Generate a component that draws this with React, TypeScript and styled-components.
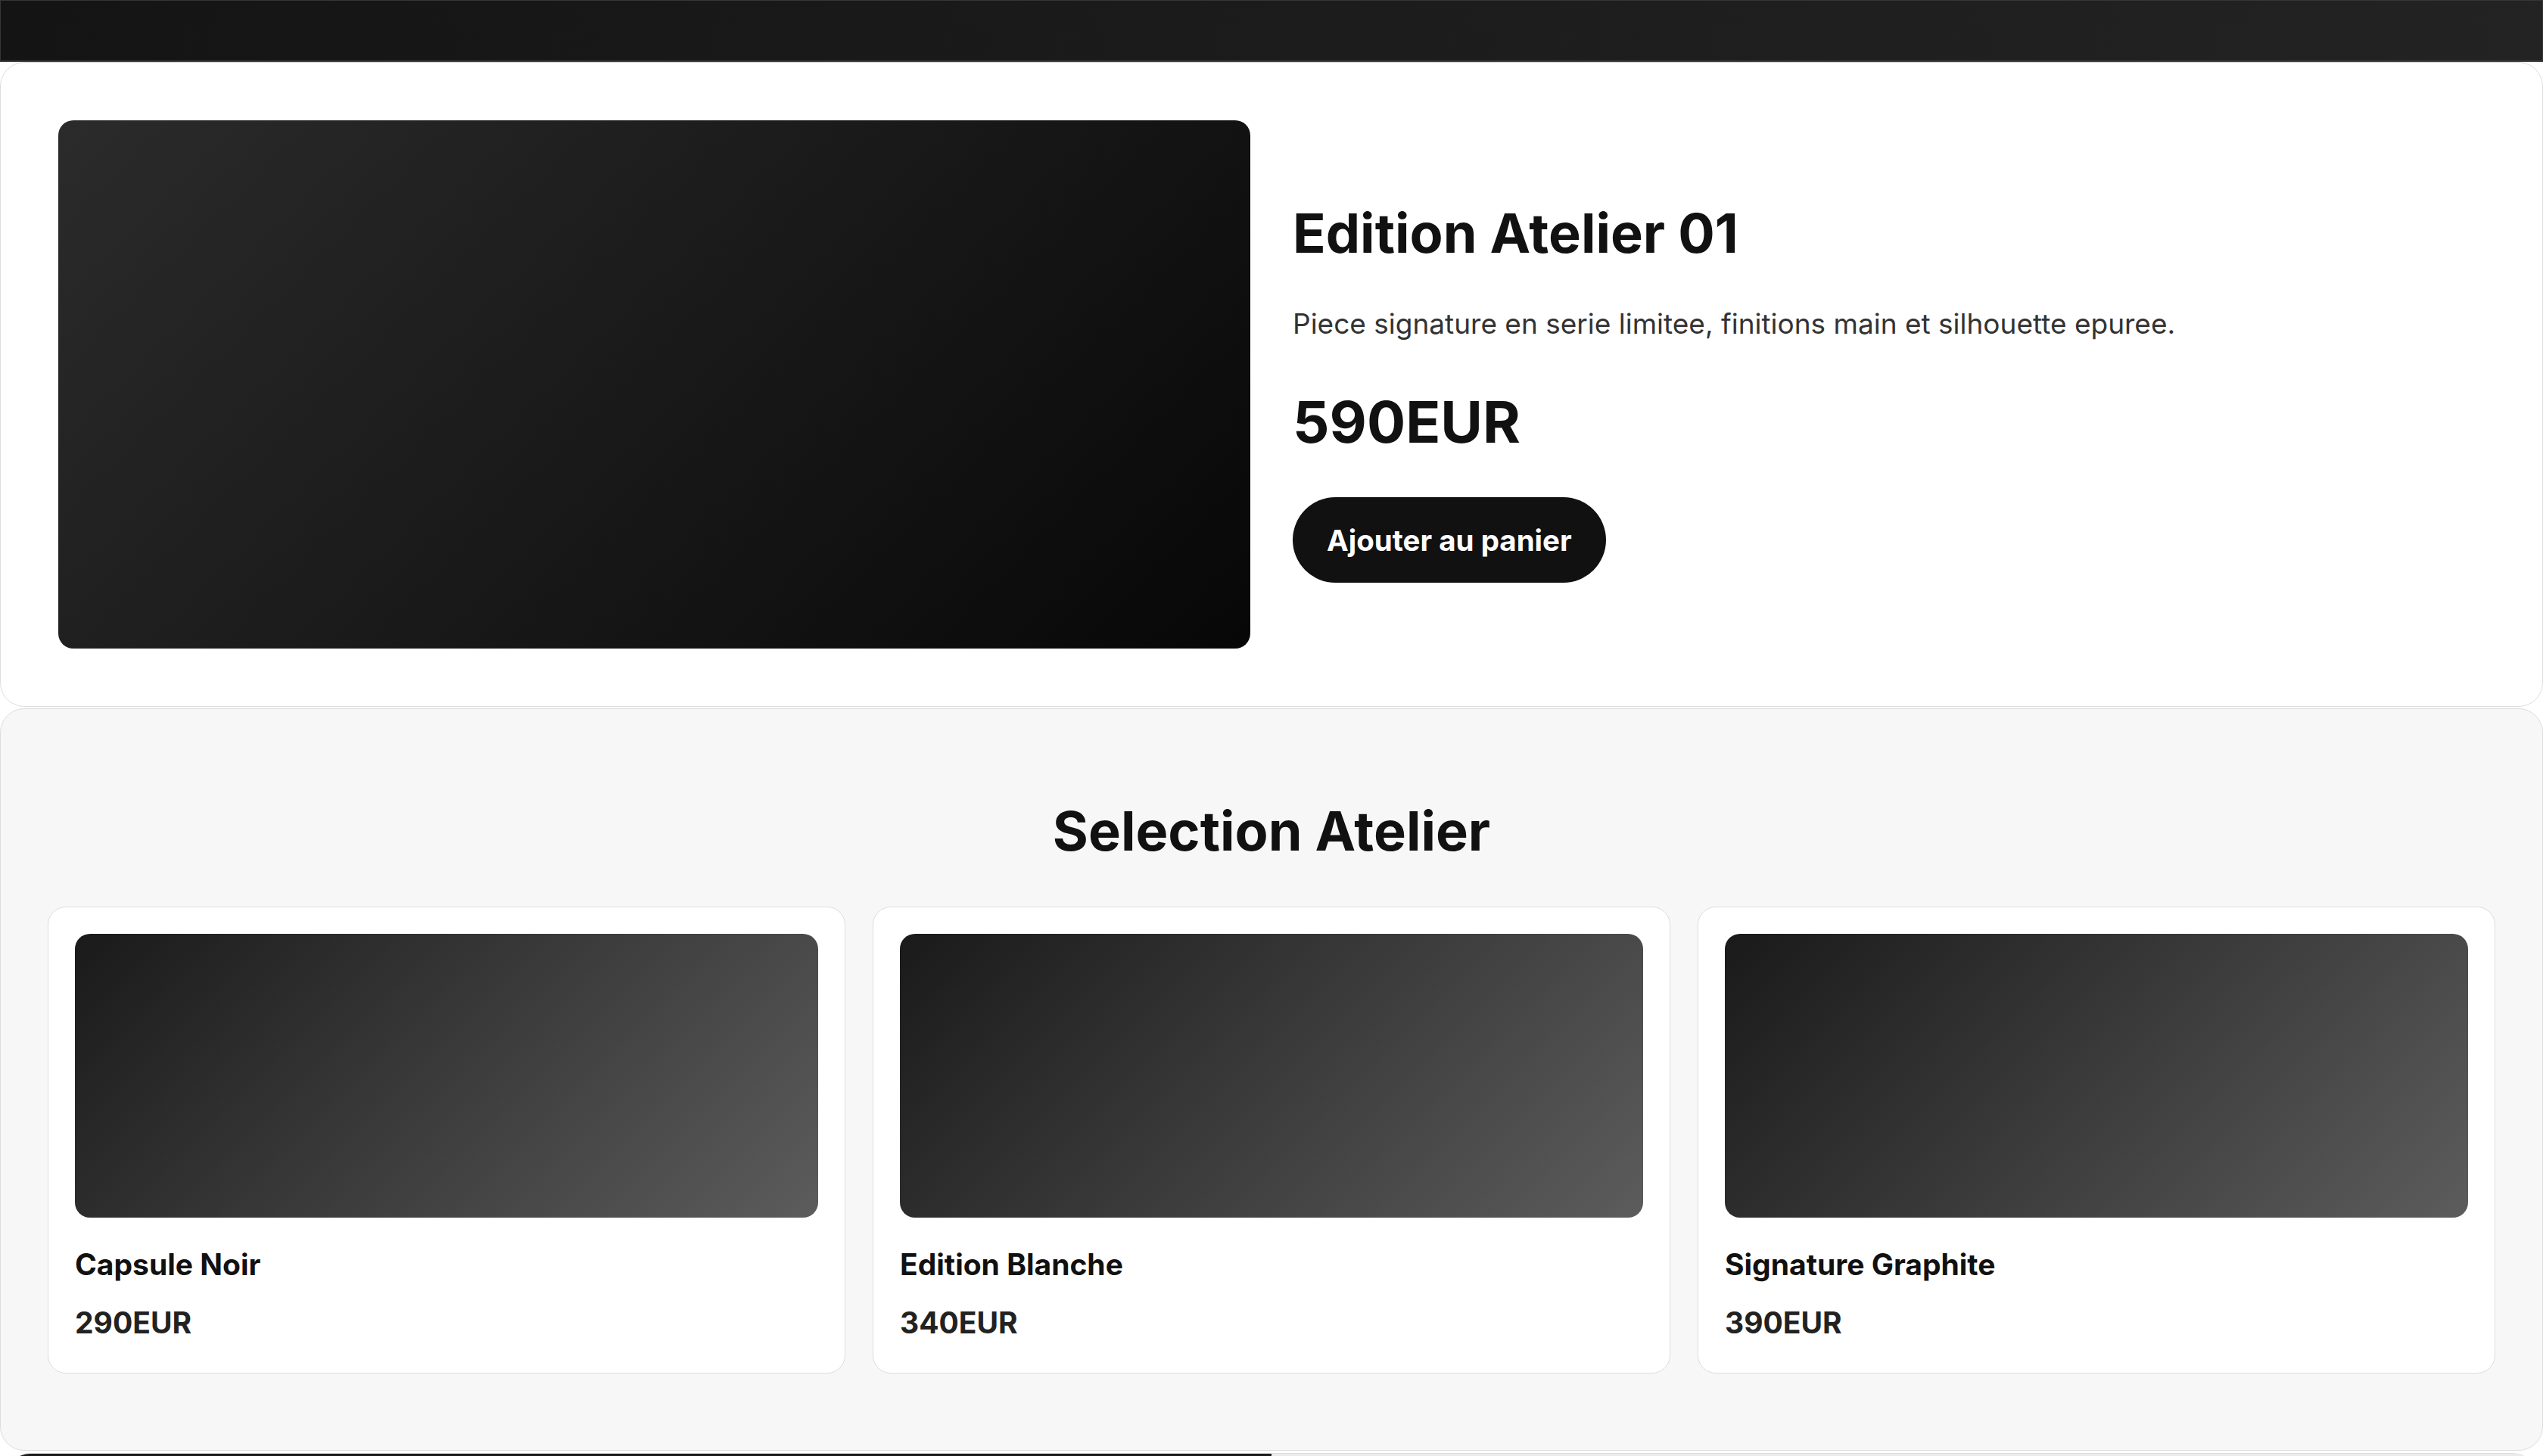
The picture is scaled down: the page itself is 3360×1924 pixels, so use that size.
import { createGlobalStyle, styled } from 'styled-components';

type Product = {
  name: string;
  price: string;
};

const products: Product[] = [
  { name: 'Capsule Noir', price: '290EUR' },
  { name: 'Edition Blanche', price: '340EUR' },
  { name: 'Signature Graphite', price: '390EUR' },
];

const App = () => {
  return (
    <>
      <GlobalStyle />
      <TopBar />
      <Hero>
        <HeroVisual />
        <HeroInfo>
          <HeroTitle>Edition Atelier 01</HeroTitle>
          <HeroText>Piece signature en serie limitee, finitions main et silhouette epuree.</HeroText>
          <HeroPrice>590EUR</HeroPrice>
          <CartButton type="button">Ajouter au panier</CartButton>
        </HeroInfo>
      </Hero>
      <Collection>
        <SectionTitle>Selection Atelier</SectionTitle>
        <ProductGrid>
          {products.map((product) => (
            <ProductCard key={product.name}>
              <ProductVisual />
              <ProductName>{product.name}</ProductName>
              <ProductPrice>{product.price}</ProductPrice>
            </ProductCard>
          ))}
        </ProductGrid>
      </Collection>
      <Banner>
        <BannerHalf $dark />
        <BannerHalf />
      </Banner>
    </>
  );
};
export default App;

const GlobalStyle = createGlobalStyle`
  html, body {
    margin: 0;
    padding: 0;
    background: #ffffff;
  }
  body {
    font-family: Inter, "Noto Sans", "Liberation Sans", sans-serif;
    color: #111111;
  }
  * {
    box-sizing: border-box;
  }
`;

const TopBar = styled.header`
  height: 82px;
  background: linear-gradient(90deg, #141414, #232323);
  border: 1px solid #363636;
  border-bottom: 2px solid #444444;
`;

const Hero = styled.section`
  display: grid;
  grid-template-columns: 1fr 1fr;
  gap: 56px;
  align-items: start;
  padding: 76px;
  background: #ffffff;
  border: 1px solid #dddddd;
  border-radius: 32px;
`;

const HeroVisual = styled.div`
  height: 698px;
  border-radius: 20px;
  background: linear-gradient(135deg, #2b2b2b, #070707);
`;

const HeroInfo = styled.div`
  display: flex;
  flex-direction: column;
  align-items: flex-start;
  padding-top: 109px;
`;

const HeroTitle = styled.h1`
  margin: 0 0 52px;
  font-size: 72px;
  line-height: 1.1;
  font-weight: 700;
  color: #111111;
`;

const HeroText = styled.p`
  margin: 0 0 59px;
  font-size: 37px;
  line-height: 1.55;
  color: #333333;
`;

const HeroPrice = styled.div`
  margin-bottom: 58px;
  font-size: 76px;
  line-height: 1.1;
  font-weight: 700;
  color: #111111;
`;

const CartButton = styled.button`
  height: 113px;
  padding: 0 45px;
  border: none;
  border-radius: 999px;
  background: #111111;
  color: #ffffff;
  font-family: inherit;
  font-size: 38.5px;
  font-weight: 700;
  cursor: pointer;
`;

const Collection = styled.section`
  margin-top: 2px;
  padding: 121px 62px 101px;
  background: #f7f7f7;
  border: 1px solid #dddddd;
  border-radius: 32px;
`;

const SectionTitle = styled.h2`
  margin: 0 0 61px;
  text-align: center;
  font-size: 72px;
  line-height: 1.1;
  font-weight: 700;
  color: #111111;
`;

const ProductGrid = styled.div`
  display: grid;
  grid-template-columns: repeat(3, 1fr);
  gap: 36px;
`;

const ProductCard = styled.article`
  padding: 35px 35px 40px;
  background: #ffffff;
  border: 1px solid #dddddd;
  border-radius: 24px;
`;

const ProductVisual = styled.div`
  height: 375px;
  margin-bottom: 37px;
  border-radius: 20px;
  background: linear-gradient(135deg, #1a1a1a, #5c5c5c);
`;

const ProductName = styled.h3`
  margin: 0 0 26px;
  font-size: 39px;
  line-height: 1.3;
  font-weight: 700;
  color: #111111;
`;

const ProductPrice = styled.div`
  font-size: 39px;
  line-height: 1.3;
  font-weight: 700;
  color: #222222;
`;

const Banner = styled.section`
  display: grid;
  grid-template-columns: 1fr 1fr;
  height: 420px;
  margin: 3px 8px 0;
  border-radius: 32px;
  overflow: hidden;
  border: 1px solid #dddddd;
`;

const BannerHalf = styled.div<{ $dark?: boolean }>`
  background: ${({ $dark }) => ($dark ? '#1c1c1c' : '#ebebeb')};
`;
